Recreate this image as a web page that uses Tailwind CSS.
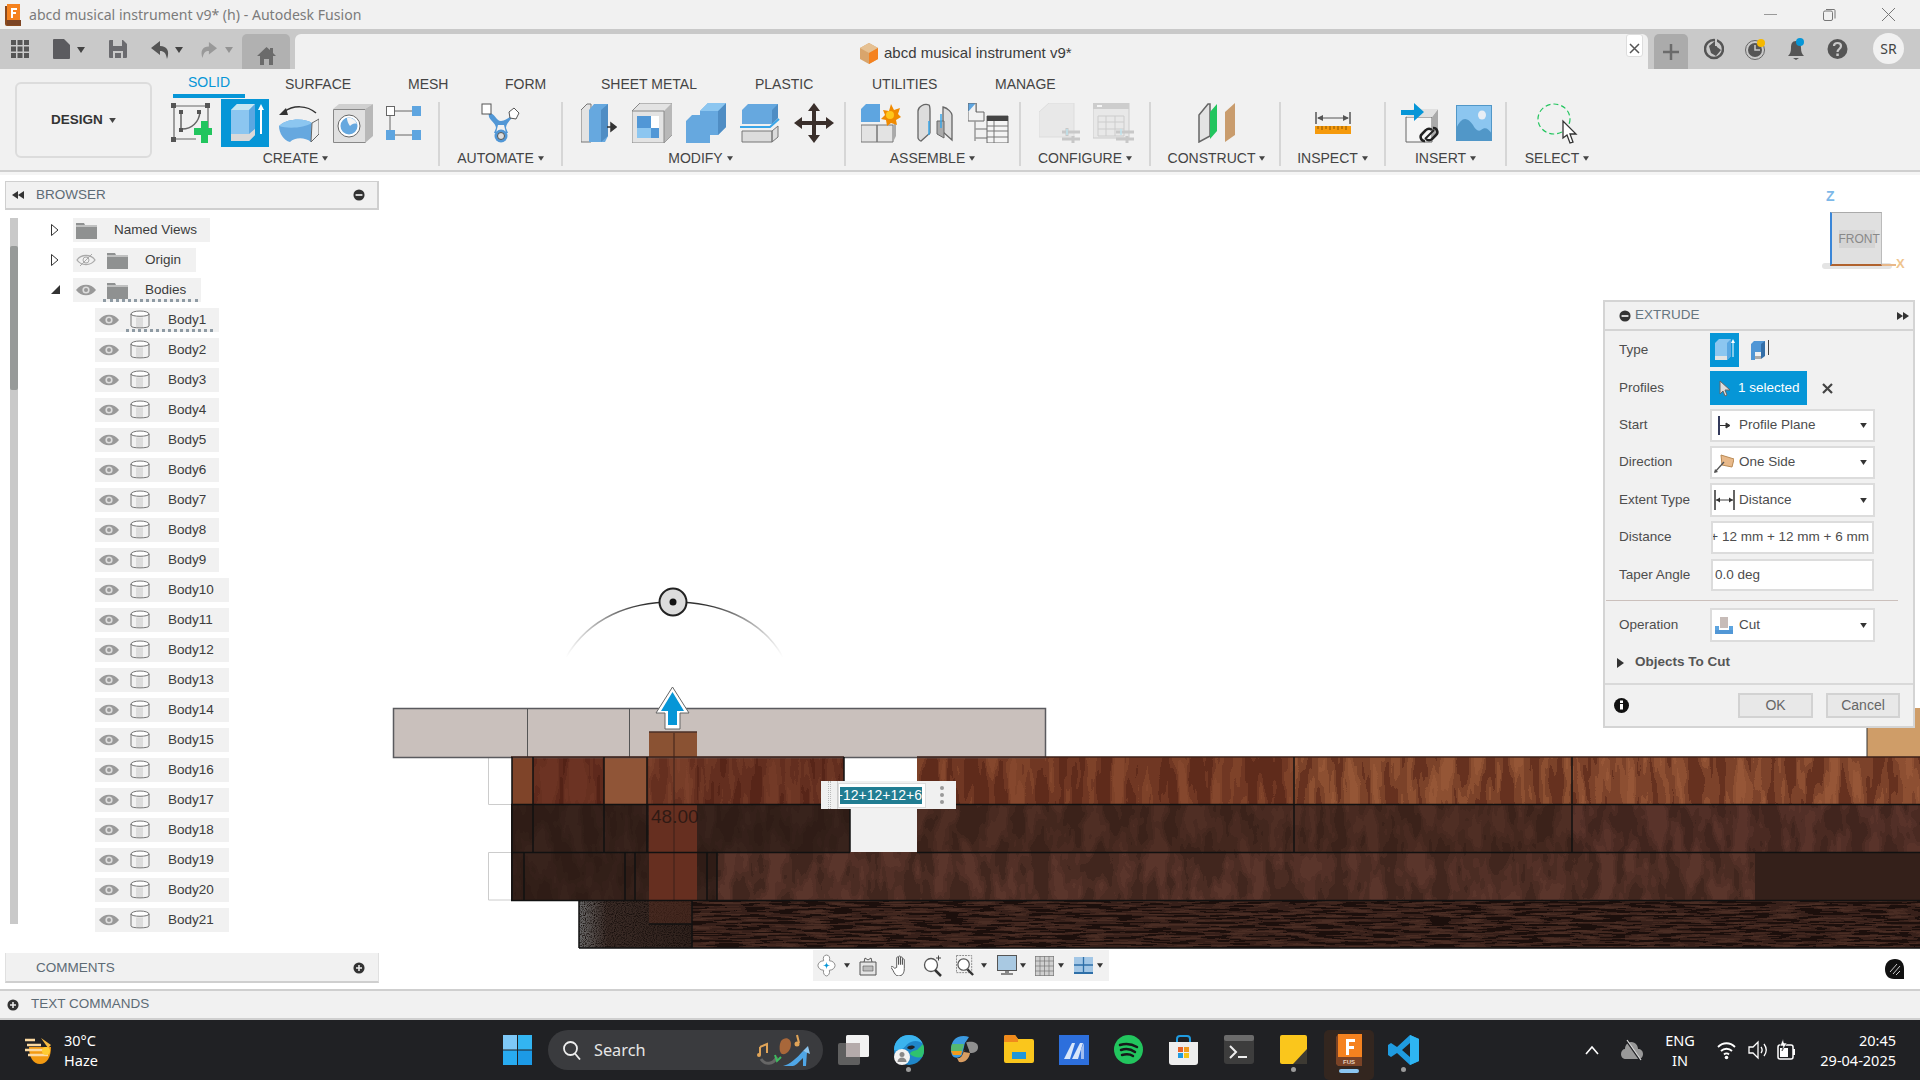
<!DOCTYPE html>
<html lang="en">
<head>
<meta charset="UTF-8">
<title>abcd musical instrument v9* (h) - Autodesk Fusion</title>
<script src="https://cdn.jsdelivr.net/npm/@tailwindcss/browser@4"></script>
</head>
<body class="w-[1920px] h-[1080px] overflow-hidden bg-white font-['Liberation_Sans',Arial,sans-serif] text-[13.5px] text-[#444]">

<!-- shared icons -->
<svg class="hidden">
  <symbol id="caret" viewBox="0 0 8 6"><path d="M0 0h8L4 6z" fill="#444"/></symbol>
  <symbol id="eye" viewBox="0 0 20 14"><path d="M0 7C5 0 15 0 20 7C15 14 5 14 0 7Z" fill="#999"/><circle cx="10" cy="7" r="3.6" fill="#ddd"/><circle cx="10" cy="7" r="2" fill="#999"/></symbol>
  <symbol id="folder" viewBox="0 0 21 17"><path d="M0 1h8l1 2h12v14H0z" fill="#8f9191"/><path d="M0 4h21" stroke="#f1f1f1"/></symbol>
  <symbol id="body" viewBox="0 0 20 20"><ellipse cx="10" cy="4" rx="9" ry="3" fill="#fff" stroke="#777"/><path d="M1 4v12c0 2.5 18 2.5 18 0V4c0 3-18 3-18 0z" fill="#f2f2f2" stroke="#777"/><path d="M6 7.500h7v9.500H6z" fill="#dcdcdc"/></symbol>
  <symbol id="plusdot" viewBox="0 0 14 14"><circle cx="7" cy="7" r="6.500" fill="#333"/><path d="M3.500 7h7M7 3.500v7" stroke="#eee" stroke-width="1.800"/></symbol>
  <symbol id="minusdot" viewBox="0 0 14 14"><circle cx="7" cy="7" r="6.500" fill="#333"/><path d="M3 7h8" stroke="#eee" stroke-width="2"/></symbol>
  <symbol id="dcaret" viewBox="0 0 8 6"><path d="M0 0h8L4 6z" fill="#333"/></symbol>
</svg>

<!-- title bar -->
<header class="h-[29px] bg-[#f1f1f1] flex items-center relative">
  <svg class="ml-[4px] w-[18px] h-[22px]" viewBox="0 0 18 22"><path d="M3 0h13v17H3z" fill="#f5821f"/><path d="M1 2h2v18h14v2H3a2 2 0 0 1-2-2z" fill="#8a4a1e"/><path d="M3 16h14v5H3z" fill="#7b4424"/><path d="M7 4h6v2H9v2h3v2H9v4H7z" fill="#fff"/></svg>
  <span class="ml-[7px] font-['Noto_Sans',sans-serif] text-[14.1px] text-[#7b7b7b] whitespace-nowrap">abcd musical instrument v9* (h) - Autodesk Fusion</span>
  <div class="ml-auto flex items-center text-[#666]">
    <svg class="w-[13px] h-[13px]" viewBox="0 0 13 13"><path d="M0 6.500h13" stroke="#999"/></svg>
    <svg class="ml-[46px] w-[13px] h-[13px]" viewBox="0 0 13 13"><path d="M3 1.500h8a1 1 0 0 1 1 1v8" fill="none" stroke="#777"/><rect x=".5" y="3" width="9" height="9.500" rx="1.500" fill="none" stroke="#777"/></svg>
    <svg class="ml-[46px] mr-[25px] w-[13px] h-[13px]" viewBox="0 0 13 13"><path d="M0 0l13 13M13 0L0 13" stroke="#777"/></svg>
  </div>
</header>

<!-- tab bar -->
<div class="h-[40px] bg-[#c9c9c9] flex items-end">
  <div class="w-[242px] h-[40px] flex items-center relative">
    <svg class="absolute left-[11px] top-[11px] w-[18px] h-[18px]" viewBox="0 0 18 18"><path d="M0 0h5v5H0zM6.500 0h5v5h-5zM13 0h5v5h-5zM0 6.500h5v5H0zM6.500 6.500h5v5h-5zM13 6.500h5v5h-5zM0 13h5v5H0zM6.500 13h5v5h-5zM13 13h5v5h-5z" fill="#555"/></svg>
    <svg class="absolute left-[53px] top-[10px] w-[17px] h-[20px]" viewBox="0 0 17 20"><path d="M1 0h10l6 6v13a1 1 0 0 1-1 1H1a1 1 0 0 1-1-1V1a1 1 0 0 1 1-1z" fill="#5b5b5f"/></svg>
    <svg class="absolute left-[77px] top-[18px] w-[8px] h-[6px]"><use href="#caret"/></svg>
    <svg class="absolute left-[109px] top-[11px] w-[18px] h-[18px]" viewBox="0 0 18 18"><path d="M1 0h13l4 4v13a1 1 0 0 1-1 1H1a1 1 0 0 1-1-1V1a1 1 0 0 1 1-1z" fill="#6b6b6f"/><path d="M4 0h9v6H4zM4 11h10v7H4z" fill="#c9c9c9"/><path d="M6 13h6v5H6z" fill="#6b6b6f"/></svg>
    <svg class="absolute left-[151px] top-[12px] w-[20px] h-[18px]" viewBox="0 0 20 18"><path d="M9 0L0 7l9 7v-4c4 0 6 2 7 8 3-8 0-13-7-13z" fill="#555"/></svg>
    <svg class="absolute left-[175px] top-[18px] w-[8px] h-[6px]"><use href="#caret"/></svg>
    <svg class="absolute left-[199px] top-[12px] w-[18px] h-[18px]" viewBox="0 0 20 18"><path d="M11 0l9 7-9 7v-4c-4 0-6 2-7 8C1 10 4 5 11 5z" fill="#999"/></svg>
    <svg class="absolute left-[225px] top-[18px] w-[8px] h-[6px] opacity-40"><use href="#caret"/></svg>
  </div>
  <div class="w-[48px] h-[35px] bg-[#b1b1b1] rounded-t-[5px] flex items-center justify-center pt-[8px]">
    <svg class="w-[19px] h-[18px]" viewBox="0 0 19 18"><path d="M9.500 0L0 9h3v9h4v-6h5v6h4V9h3l-3-3V1h-3v2z" fill="#6b6b6b"/></svg>
  </div>
  <div class="ml-[5px] w-[1353px] h-[35px] bg-[#f1f1f1] rounded-t-[6px] relative flex items-center justify-center">
    <div class="absolute left-[565px] top-[8px] flex items-center whitespace-nowrap">
      <svg class="w-[18px] h-[21px]" viewBox="0 0 18 21"><path d="M9 0l9 5v11l-9 5-9-5V5z" fill="#d9a56c"/><path d="M9 0l9 5-9 5-9-5z" fill="#e6c193"/><path d="M9 10l9-5v11l-9 5z" fill="#f5821f"/></svg>
      <span class="ml-[6px] text-[15px] text-[#3c3c3c]">abcd musical instrument v9*</span>
    </div>
    <div class="absolute left-[1331px] top-0 w-[17px] h-[23px] bg-white rounded-[3px] border border-[#ddd] flex items-end justify-center pb-[2px]">
      <svg class="w-[11px] h-[11px]" viewBox="0 0 11 11"><path d="M1 1l9 9M10 1l-9 9" stroke="#555" stroke-width="1.500"/></svg>
    </div>
  </div>
  <div class="ml-[6px] w-[34px] h-[35px] bg-[#ababab] rounded-t-[5px] flex items-center justify-center">
    <svg class="w-[16px] h-[16px]" viewBox="0 0 16 16"><path d="M8 0v16M0 8h16" stroke="#6b6b6b" stroke-width="2.500"/></svg>
  </div>
  <div class="flex items-center h-[40px] relative flex-1">
    <svg class="absolute left-[16px] top-[9px] w-[20px] h-[22px]" viewBox="0 0 20 22"><circle cx="10" cy="11" r="9" fill="none" stroke="#555" stroke-width="2.500"/><path d="M5 8l6-5 2 6 4 3-5 6-5-3z" fill="#555"/><path d="M12 0v8" stroke="#c9c9c9" stroke-width="2"/></svg>
    <svg class="absolute left-[57px] top-[9px] w-[21px] h-[22px]" viewBox="0 0 21 22"><circle cx="10" cy="12" r="9.500" fill="none" stroke="#666"/><circle cx="10" cy="12" r="7" fill="#555"/><path d="M10 7v5h5" fill="none" stroke="#c9c9c9" stroke-width="1.500"/><circle cx="16" cy="5" r="4" fill="#f5b800"/></svg>
    <svg class="absolute left-[100px] top-[9px] w-[17px] h-[23px]" viewBox="0 0 17 23"><path d="M8 3c-4 0-5 3-5 7 0 4-1 6-3 8h16c-2-2-3-4-3-8 0-4-1-7-5-7z" fill="#555"/><path d="M5 20h6l-3 2z" fill="#555"/><circle cx="12" cy="4" r="4" fill="#0696d7"/></svg>
    <svg class="absolute left-[139px] top-[9px] w-[21px] h-[22px]" viewBox="0 0 21 22"><circle cx="10.500" cy="11" r="10" fill="#555"/><path d="M7 8c0-4 7-4 7 0 0 3-3.500 3-3.500 6" fill="none" stroke="#c9c9c9" stroke-width="2.200"/><path d="M9.300 15.500h2.500V18H9.300z" fill="#c9c9c9"/></svg>
    <div class="absolute left-[185px] top-[4px] w-[31px] h-[31px] rounded-full bg-[#f1f1f1] flex items-center justify-center font-['Noto_Sans',sans-serif] text-[14px] text-[#444]">SR</div>
  </div>
</div>

<!-- ribbon -->
<div class="h-[103px] bg-[#f1f1f1] border-b-2 border-[#cfcfcf] flex text-[14px]">
  <div class="ml-[15px] mt-[13px] w-[137px] h-[76px] border-2 border-[#dcdcdc] rounded-[6px] flex items-center justify-center gap-[6px] font-bold text-[#333] text-[13.5px]">DESIGN <svg class="w-[7px] h-[5px]"><use href="#caret"/></svg></div>
  <div class="flex flex-col">
    <div class="flex h-[29px] text-[#444]">
      <div class="ml-[21px] w-[72px] h-[29px] border-b-4 border-[#0696d7] text-[#0696d7] flex items-center justify-center pt-[2px]">SOLID</div>
      <div class="ml-[40px] flex items-center h-[29px] pt-[1px] whitespace-nowrap"><span class="w-[123px]">SURFACE</span><span class="w-[97px]">MESH</span><span class="w-[96px]">FORM</span><span class="w-[154px]">SHEET METAL</span><span class="w-[117px]">PLASTIC</span><span class="w-[123px]">UTILITIES</span><span>MANAGE</span></div>
    </div>
    <div class="flex mt-[4px] ml-[1px]">

      <!-- CREATE -->
      <div class="w-[287px] h-[64px] border-r-2 border-[#d6d6d6] flex flex-col">
        <div class="h-[42px] flex items-center pl-[18px]">
          <svg class="w-[41px] h-[41px]" viewBox="0 0 41 41"><path d="M3 3h34M3 3v33M3 36h22M37 3v22" stroke="#666" stroke-width="1.200"/><path d="M10 10v17M11 26c10 0 17-7 18-17" fill="none" stroke="#666" stroke-width="1.500"/><path d="M0 0h5v5H0zM34 0h5v5h-5zM0 34h5v5H0zM8 7h4v4H8zM8 25h4v4H8zM26 7h4v4h-4z" fill="#555"/><path d="M24 24h7v-7h7v7h4v7h-4v8h-7v-8h-7z" fill="#22c55e" transform="translate(-1 1)"/></svg>
          <div class="ml-[9px] w-[48px] h-[48px] -my-[3px] bg-[#0696d7] flex items-center justify-center shrink-0">
            <svg class="w-[40px] h-[44px]" viewBox="0 0 40 44"><path d="M6 9L12 3h18v31l-6 6H6z" fill="#8cc6f0"/><path d="M6 9L12 3h18l-6 6z" fill="#c4e6f2"/><path d="M24 9l6-6v25l-6 6z" fill="#5aa7e2"/><path d="M6 33h18v7H6zM24 33l6-5v6l-6 6z" fill="#d9d9d9"/><path d="M36 3l-3 6h2v24h2V9h2z" fill="#fff"/></svg>
          </div>
          <svg class="ml-[10px] w-[40px] h-[40px] shrink-0" viewBox="0 0 40 40"><path d="M37 10C28 2 14 2 5 9" fill="none" stroke="#333" stroke-width="1.500"/><path d="M0 12l7-7 2 7z" fill="#333"/><path d="M0 23c8-8 26-8 33-3l-1 19c-6-5-16-5-21 0C5 38 0 30 0 23z" fill="#66a8df"/><path d="M0 23c8-8 26-8 33-3-8 5-24 6-33 3z" fill="#8cc6f0"/><path d="M33 20l7-4v15l-8 8z" fill="#eee" stroke="#666"/></svg>
          <svg class="ml-[14px] w-[40px] h-[40px] shrink-0" viewBox="0 0 40 40"><path d="M.5 6.500h32v33H.5z" fill="#e0e0e0" stroke="#888"/><path d="M0 6l6-5h34l-8 5z" fill="#d0d0d0"/><path d="M32 6l8-5v32l-8 7z" fill="#b8b8b8"/><circle cx="16" cy="23" r="11" fill="#fff" stroke="#666"/><circle cx="16" cy="23" r="8.500" fill="#66a8df"/><path d="M14 15a8.500 8.500 0 0 1 10 6c-3-1-5 0-7 2-2-3-3-5-3-8z" fill="#f4f4f4"/></svg>
          <svg class="ml-[13px] w-[35px] h-[34px] shrink-0" viewBox="0 0 35 34"><rect x=".5" y=".5" width="8" height="9" fill="#fff" stroke="#666"/><path d="M9 5h17M4 10v14M9 29h17" stroke="#666"/><path d="M26 0h9v10h-9zM0 24h9v10H0zM26 24h9v10h-9z" fill="#5ea5e0"/></svg>
        </div>
        <div class="mt-[6px] leading-[16px] flex items-center justify-center gap-[4px]">CREATE <svg class="w-[6px] h-[5px]"><use href="#caret"/></svg></div>
      </div>

      <!-- AUTOMATE -->
      <div class="w-[123px] h-[64px] border-r-2 border-[#d6d6d6] flex flex-col">
        <div class="h-[42px] flex items-center justify-center">
          <svg class="w-[40px] h-[40px]" viewBox="0 0 40 40"><path d="M8 10c6 0 7 8 12 8 5 0 9-5 12-6-1 5-7 7-7 13l2 5h-14l2-5c0-6-9-8-7-15z" fill="#5197d6"/><path d="M17 22h6l2 8h-10z" fill="#f1f1f1"/><circle cx="20" cy="33" r="6.500" fill="#5197d6"/><circle cx="20" cy="33" r="3.500" fill="#ddd" stroke="#555"/><rect x="1" y="1" width="9" height="10" fill="#fff" stroke="#555"/><path d="M33 5l5 5-3 6-6-1-1-6z" fill="#fff" stroke="#555"/></svg>
        </div>
        <div class="mt-[6px] leading-[16px] flex items-center justify-center gap-[4px]">AUTOMATE <svg class="w-[6px] h-[5px]"><use href="#caret"/></svg></div>
      </div>

      <!-- MODIFY -->
      <div class="w-[283px] h-[64px] border-r-2 border-[#d6d6d6] flex flex-col">
        <div class="h-[42px] flex items-center pl-[18px]">
          <svg class="w-[36px] h-[40px]" viewBox="0 0 36 40"><path d="M0 7l6-6h4v38H0z" fill="#e3e3e3" stroke="#777"/><path d="M8 7l5-6h14v32l-3 6H8z" fill="#66a8df"/><path d="M20 7l7-6v32l-7 6z" fill="#4f8dc4"/><path d="M26 24h7M30 20l5 4-5 4z" stroke="#333" stroke-width="1.500" fill="#333"/></svg>
          <svg class="ml-[15px] w-[40px] h-[40px]" viewBox="0 0 40 40"><path d="M0 8l8-8h32v32l-8 8H0z" fill="#e3e3e3" stroke="#888"/><path d="M32 8l8-8v32l-8 8z" fill="#b8b8b8"/><path d="M0 8h32v32" fill="none" stroke="#888"/><path d="M5 13h22v22H5z" fill="#fff"/><path d="M5 13h14v12h8v10H5z" fill="#5197d6"/><path d="M5 25h14v10H5z" fill="#8cc6f0"/></svg>
          <svg class="ml-[14px] w-[40px] h-[40px]" viewBox="0 0 40 40"><path d="M14 8l8-8h18v24l-8 8h-8v8H0V18l6-6h8z" fill="#66a8df"/><path d="M32 8l8-8v24l-8 8z" fill="#4f8dc4"/><path d="M14 8l8-8h18l-8 8z" fill="#8cc6f0"/></svg>
          <svg class="ml-[14px] w-[40px] h-[40px]" viewBox="0 0 40 40"><path d="M2 7l6-6h30v14l-6 6H2z" fill="#66a8df"/><path d="M32 7l6-6v14l-6 6z" fill="#4f8dc4"/><path d="M0 24h30l9-8" fill="none" stroke="#39a5e8" stroke-width="2"/><path d="M2 28h30v11H2zM32 28l6-5v11l-6 5z" fill="#dcdcdc" stroke="#777"/></svg>
          <svg class="ml-[14px] w-[40px] h-[40px]" viewBox="0 0 40 40"><path d="M20 0l6 8h-4v10h10v-4l8 6-8 6v-4H22v10h4l-6 8-6-8h4V22H8v4l-8-6 8-6v4h10V8h-4z" fill="#3a2f2b"/></svg>
        </div>
        <div class="mt-[6px] pr-[6px] leading-[16px] flex items-center justify-center gap-[4px]">MODIFY <svg class="w-[6px] h-[5px]"><use href="#caret"/></svg></div>
      </div>

      <!-- ASSEMBLE -->
      <div class="w-[175px] h-[64px] border-r-2 border-[#d6d6d6] flex flex-col">
        <div class="h-[42px] flex items-center pl-[15px]">
          <svg class="w-[40px] h-[40px]" viewBox="0 0 40 40"><path d="M0 6l5-5h14v18H0z" fill="#5ea5e0"/><path d="M0 22h16v17H0zM16 22h16v17H16z" fill="#e3e3e3" stroke="#777"/><path d="M32 22l3-3v14l-3 6z" fill="#aaa"/><path d="M30 1l3 6 6-2-2 6 3 3-5 3 1 5-6-2-4 3-1-6-5-1 4-4-2-5 6 1z" fill="#f08a00"/><circle cx="29" cy="12" r="4" fill="#ffc61a"/></svg>
          <svg class="ml-[16px] w-[36px] h-[40px]" viewBox="0 0 36 40"><path d="M1 8c0-4 6-8 11-6 1 1 1 3 1 6v22L4 38c-1 0-3-2-3-3z" fill="#ddd" stroke="#666" stroke-width="1.300"/><path d="M35 12c0-2-4-7-9-8v25l9 8z" fill="#ddd" stroke="#666" stroke-width="1.300"/><path d="M20 18h7v17l-7-4z" fill="#aaa" stroke="#666"/><path d="M24 11v14M12 18v14" stroke="#39a5e8" stroke-width="1.500"/></svg>
          <svg class="ml-[15px] w-[41px] h-[40px]" viewBox="0 0 41 40"><path d="M0 0h8v9H0z" fill="#5ea5e0" stroke="#666"/><path d="M8 0v9h8v9H0V9" fill="#f1f1f1" stroke="#666"/><path d="M7 18v20M7 26h12M7 35h12" stroke="#999" stroke-width="1.500"/><path d="M19 13h21v27H19z" fill="#f4f4f4" stroke="#666"/><path d="M19 13h21v5H19z" fill="#444"/><path d="M19 23h21M19 28h21M19 34h21M26 18v22" stroke="#777"/></svg>
        </div>
        <div class="mt-[6px] leading-[16px] flex items-center justify-center gap-[4px]">ASSEMBLE <svg class="w-[6px] h-[5px]"><use href="#caret"/></svg></div>
      </div>

      <!-- CONFIGURE -->
      <div class="w-[130px] h-[64px] border-r-2 border-[#d6d6d6] flex flex-col">
        <div class="h-[42px] flex items-center pl-[18px]">
          <svg class="w-[41px] h-[40px]" viewBox="0 0 41 40"><path d="M0 9l10-9h25v34H0z" fill="#e8e8e8" stroke="#ddd"/><path d="M23 29h18M23 36h18" stroke="#c8c8c8" stroke-width="3"/><path d="M28 25v8M34 33v7" stroke="#c8c8c8" stroke-width="3"/><path d="M28 26v6" stroke="#bfe4ef" stroke-width="1.500"/></svg>
          <svg class="ml-[13px] w-[41px] h-[40px]" viewBox="0 0 41 40"><path d="M0 0h36v35H0z" fill="#e8e8e8" stroke="#ccc"/><path d="M0 0h36v6H0z" fill="#cdcdcd"/><path d="M4 2h5v2H4z" fill="#f5f5f5"/><path d="M5 13h26v20H5zM5 19h26M5 26h26M13 13v20M22 13v20" fill="none" stroke="#ccc"/><path d="M23 29h18M23 36h18" stroke="#c8c8c8" stroke-width="3"/><path d="M34 33v7" stroke="#c8c8c8" stroke-width="3"/><path d="M28 26v6" stroke="#bfe4ef" stroke-width="1.500"/></svg>
        </div>
        <div class="mt-[6px] leading-[16px] flex items-center justify-center gap-[4px]">CONFIGURE <svg class="w-[6px] h-[5px]"><use href="#caret"/></svg></div>
      </div>

      <!-- CONSTRUCT -->
      <div class="w-[130px] h-[64px] border-r-2 border-[#d6d6d6] flex flex-col">
        <div class="h-[42px] flex items-center pl-[47px]">
          <svg class="w-[38px] h-[40px]" viewBox="0 0 38 40"><path d="M1 12L10 1h2v32l-11 6z" fill="#e3e3e3" stroke="#666" stroke-width="1.500"/><path d="M12 9L19 1v27l-7 8z" fill="#22c55e"/><path d="M27 9L37 0v32l-10 7z" fill="#c99c6d"/></svg>
        </div>
        <div class="mt-[6px] pl-[3px] leading-[16px] flex items-center justify-center gap-[4px]">CONSTRUCT <svg class="w-[6px] h-[5px]"><use href="#caret"/></svg></div>
      </div>

      <!-- INSPECT -->
      <div class="w-[105px] h-[64px] border-r-2 border-[#d6d6d6] flex flex-col">
        <div class="h-[42px] flex items-center justify-center">
          <svg class="w-[36px] h-[40px]" viewBox="0 0 36 40"><path d="M1 9v12M35 9v12" stroke="#555" stroke-width="1.500"/><path d="M3 15h30" stroke="#555"/><path d="M2 15l6-3v6zM34 15l-6-3v6z" fill="#555"/><path d="M0 23h36v8H0z" fill="#f59a0c"/><path d="M3 23v3M7 23v4M11 23v3M15 23v4M19 23v3M23 23v4M27 23v3M31 23v4" stroke="#8a5500"/></svg>
        </div>
        <div class="mt-[6px] leading-[16px] flex items-center justify-center gap-[4px]">INSPECT <svg class="w-[6px] h-[5px]"><use href="#caret"/></svg></div>
      </div>

      <!-- INSERT -->
      <div class="w-[121px] h-[64px] border-r-2 border-[#d6d6d6] flex flex-col">
        <div class="h-[42px] flex items-center pl-[15px]">
          <svg class="w-[40px] h-[41px]" viewBox="0 0 40 41"><path d="M5 14h26v25H5z" fill="#f5f5f5" stroke="#666"/><path d="M31 14l6-8v24l-6 7z" fill="#aaa"/><path d="M5 14l7-8h25l-6 8z" fill="#e0e0e0"/><path d="M0 7h13V0l10 9-10 9v-6H0z" fill="#0696d7"/><path d="M24 36l9-9" stroke="#222" stroke-width="2"/><path d="M24 38a4 4 0 0 1-3-7l4-4a4 4 0 0 1 6 0M32 25a4 4 0 0 1 3 7l-4 4a4 4 0 0 1-6 0" fill="none" stroke="#222" stroke-width="2.500"/></svg>
          <svg class="ml-[15px] w-[36px] h-[36px]" viewBox="0 0 36 36"><path d="M0 0h36v36H0z" fill="#8cc6f0"/><path d="M0 36V24C5 12 11 11 17 20c2 4 5 7 8 5 4-3 7-2 11 4v7z" fill="#5197c8"/><ellipse cx="26" cy="10" rx="4" ry="4.500" fill="#e8eef5"/><rect x=".5" y=".5" width="35" height="35" fill="none" stroke="#5197c8"/></svg>
        </div>
        <div class="mt-[6px] leading-[16px] flex items-center justify-center gap-[4px]">INSERT <svg class="w-[6px] h-[5px]"><use href="#caret"/></svg></div>
      </div>

      <!-- SELECT -->
      <div class="w-[100px] h-[64px] flex flex-col">
        <div class="h-[42px] flex items-center pl-[30px]">
          <svg class="w-[41px] h-[41px]" viewBox="0 0 41 41"><ellipse cx="17" cy="16" rx="16" ry="15" fill="none" stroke="#22c55e" stroke-width="1.200" stroke-dasharray="5 3"/><path d="M26 18l0 17 4-3 3 8 3-1-3-8 6 0z" fill="#fff" stroke="#333" stroke-width="1.300"/></svg>
        </div>
        <div class="mt-[6px] leading-[16px] flex items-center justify-center gap-[4px]">SELECT <svg class="w-[6px] h-[5px]"><use href="#caret"/></svg></div>
      </div>
    </div>
  </div>
</div>
<div class="h-[3px] bg-[#f5f5f5]"></div>

<!-- viewport -->
<main class="h-[814px] relative bg-white overflow-hidden">

  <!-- model in the viewport -->
  <svg class="absolute inset-0 w-[1920px] h-[814px]" viewBox="0 175 1920 814">
    <defs>
      <filter id="grain" x="0" y="0" width="100%" height="100%" color-interpolation-filters="sRGB">
        <feTurbulence type="fractalNoise" baseFrequency="0.07 0.012" numOctaves="3" seed="7"/>
        <feColorMatrix type="matrix" values="0 0 0 0 .25  0 0 0 0 .08  0 0 0 0 .05  1.600 0 0 0 -.1"/>
        <feComponentTransfer><feFuncA type="discrete" tableValues="0 0 0 .1 .3 .55"/></feComponentTransfer>
        <feComposite in2="SourceGraphic" operator="in" result="d"/>
        <feMerge><feMergeNode in="SourceGraphic"/><feMergeNode in="d"/></feMerge>
      </filter>
      <filter id="grainDark" x="0" y="0" width="100%" height="100%" color-interpolation-filters="sRGB">
        <feTurbulence type="fractalNoise" baseFrequency="0.06 0.025" numOctaves="3" seed="3"/>
        <feColorMatrix type="matrix" values="0 0 0 0 .14  0 0 0 0 .08  0 0 0 0 .06  1.600 0 0 0 -.1"/>
        <feComponentTransfer><feFuncA type="discrete" tableValues="0 0 0 .12 .28 .45"/></feComponentTransfer>
        <feComposite in2="SourceGraphic" operator="in" result="d"/>
        <feMerge><feMergeNode in="SourceGraphic"/><feMergeNode in="d"/></feMerge>
      </filter>
      <filter id="grainFlat" x="0" y="0" width="100%" height="100%" color-interpolation-filters="sRGB">
        <feTurbulence type="fractalNoise" baseFrequency="0.035 0.45" numOctaves="2" seed="9"/>
        <feColorMatrix type="matrix" values="0 0 0 0 .08  0 0 0 0 .04  0 0 0 0 .03  2 0 0 0 -.3"/>
        <feComponentTransfer><feFuncA type="discrete" tableValues="0 0 .15 .35 .85"/></feComponentTransfer>
        <feComposite in2="SourceGraphic" operator="in" result="d"/>
        <feMerge><feMergeNode in="SourceGraphic"/><feMergeNode in="d"/></feMerge>
      </filter>
      <filter id="speckle" x="0" y="0" width="100%" height="100%" color-interpolation-filters="sRGB">
        <feTurbulence type="fractalNoise" baseFrequency="0.9" numOctaves="1" seed="2"/>
        <feColorMatrix type="matrix" values="0 0 0 0 .08  0 0 0 0 .05  0 0 0 0 .04  3 0 0 0 -1.300"/>
        <feComposite in2="SourceGraphic" operator="in" result="d"/>
        <feMerge><feMergeNode in="SourceGraphic"/><feMergeNode in="d"/></feMerge>
      </filter>
      <linearGradient id="arcfade" x1="0" x2="1" y1="0" y2="0">
        <stop offset="0" stop-color="#333" stop-opacity="0"/><stop offset=".35" stop-color="#333"/><stop offset=".65" stop-color="#333"/><stop offset="1" stop-color="#333" stop-opacity="0"/>
      </linearGradient>
      <linearGradient id="endgrain" x1="0" x2="1" y1="0" y2="0">
        <stop offset="0" stop-color="#6b6b6b"/><stop offset=".25" stop-color="#3a2b26"/><stop offset="1" stop-color="#2f211c"/>
      </linearGradient>
    </defs>

    <!-- white stubs on the left -->
    <path d="M488.500 757.500H512V804.500H488.500zM488.500 852.500H512V900H488.500z" fill="#fff" stroke="#ccc"/>
    <!-- tan block behind the panel -->
    <rect x="1867" y="708" width="53" height="49" fill="#cf9d68"/><path d="M1867 708V757" stroke="#333"/>

    <!-- first row -->
    <g filter="url(#grain)">
      <rect x="533" y="757" width="71" height="47" fill="#6c3323"/>
      <rect x="647" y="757" width="197" height="47" fill="#733a27"/>
      <rect x="917" y="757" width="377" height="47" fill="#85472d"/>
      <rect x="1294" y="757" width="278" height="47" fill="#955636"/>
      <rect x="1572" y="757" width="348" height="47" fill="#965637"/>
    </g>
    <rect x="512" y="757" width="21" height="47" fill="#7f4429"/>
    <rect x="604" y="757" width="43" height="47" fill="#905537"/>
    <!-- second row -->
    <g filter="url(#grainDark)">
      <rect x="511" y="804" width="339" height="48" fill="#38231c"/>
      <rect x="917" y="804" width="377" height="48" fill="#4f2e24"/>
      <rect x="1294" y="804" width="278" height="48" fill="#4f2e24"/>
      <rect x="1572" y="804" width="348" height="48" fill="#59332a"/>
    </g>
    <rect x="850" y="804" width="67" height="48" fill="#f1f1f1"/>
    <!-- third row -->
    <g filter="url(#grainDark)">
      <rect x="511" y="852" width="209" height="48" fill="#38231c"/>
      <rect x="717" y="852" width="1038" height="48" fill="#5a352b"/>
    </g>
    <rect x="1755" y="852" width="165" height="48" fill="#34201a"/>
    <!-- fourth row -->
    <rect x="692" y="900" width="1228" height="48" fill="#4a2d24" filter="url(#grainFlat)"/>
    <rect x="579" y="900" width="113" height="48" fill="url(#endgrain)" filter="url(#speckle)"/>
    <rect x="649" y="900" width="43" height="24" fill="#5c2f22" opacity=".45"/>

    <!-- grey sketch body -->
    <rect x="393.500" y="708.500" width="652" height="49" fill="#c9c0bc" stroke="#5a5a5e" stroke-width="1.500"/>
    <path d="M527.500 709V757M629.500 709V757" stroke="#555"/>

    <!-- centre pocket -->
    <rect x="649" y="732" width="48" height="25" fill="#8a5233"/>
    <path d="M649 732H697" stroke="#4a3128" stroke-width="1.500"/>
    <rect x="649" y="757" width="48" height="47" fill="#a05a3a" opacity=".2"/>
    <rect x="649" y="804" width="48" height="96" fill="#662f20"/>
    <path d="M674 733V900" stroke="#3c2018"/>

    <!-- joints -->
    <path d="M511 757H844M917 757H1920" stroke="#3c2018" stroke-width="1.500"/>
    <path d="M511 804.500H850M917 804.500H1920M511 852.500H850M917 852.500H1920M511 900.500H1920M579 948H1920" stroke="#111" stroke-width="1.500"/>
    <path d="M512 757V900M533 757V852M604 757V852M647 757V852M844 757V804M850 804V852M1294 757V852M1572 757V852M524 852V900M625 852V900M635 852V900M707 852V900M717 852V900M579 900V948M692 900V948M649 924H692" stroke="#111" stroke-width="1.500"/>

    <text x="651" y="823" font-family="Liberation Sans" font-size="19" fill="#1d1310" fill-opacity=".75">48.00</text>

    <!-- angle manipulator -->
    <path d="M566 657C590 617 630 602 673 602C716 602 760 617 783 657" fill="none" stroke="url(#arcfade)" stroke-width="1.500"/>
    <circle cx="673" cy="602" r="13.500" fill="#dcdcdc" stroke="#222" stroke-width="2"/>
    <circle cx="673" cy="602" r="3.500" fill="#111"/>
    <!-- distance arrow -->
    <path d="M672.500 687L689 713H680V729H665V713H656z" fill="#fff" stroke="#666" stroke-linejoin="round"/>
    <path d="M672.500 692L684 711H677V725H668V711H661z" fill="#0696d7"/>
  </svg>

  <!-- distance input over the model -->
  <div class="absolute left-[821px] top-[606px] w-[135px] h-[28px] bg-[#f0f0f0] flex items-center">
    <div class="w-[17px] h-full border-r border-[#ccc] flex justify-center"><div class="w-[3px] h-full border-x border-dotted border-[#bbb]"></div></div>
    <div class="w-[88px] h-[25px] bg-white border border-[#ddd] flex items-center pl-[1px] pr-[3px] overflow-hidden">
      <span class="w-full h-[17px] bg-[#217d92] text-white text-[14px] leading-[17px] whitespace-nowrap flex justify-end overflow-hidden">+12+12+12+6</span>
    </div>
    <div class="ml-[14px] flex flex-col gap-[3px]"><i class="w-[4px] h-[4px] rounded-full bg-[#999]"></i><i class="w-[4px] h-[4px] rounded-full bg-[#999]"></i><i class="w-[4px] h-[4px] rounded-full bg-[#999]"></i></div>
  </div>

  <!-- view cube -->
  <div class="absolute left-[1822px] top-[12px] w-[90px] h-[84px]">
    <span class="absolute left-[4px] top-[2px] text-[14px] font-bold leading-none text-[#7db8e8]">Z</span>
    <div class="absolute left-[0px] top-[76px] w-[70px] h-[6px] rounded-full bg-[#e4e4e4]"></div>
    <div class="absolute left-[8px] top-[25px] w-[52px] h-[54px] bg-[#e0e0e0] border-l-2 border-l-[#3a86d8] border-t border-t-[#aaa] border-r border-r-[#bbb] border-b-2 border-b-[#b0622e] flex items-center justify-center">
      <span class="w-[36px] h-[18px] bg-[#d4d4d4] text-[12px] leading-[18px] text-center text-[#888]">FRONT</span>
    </div>
    <span class="absolute left-[74px] top-[70px] text-[13px] font-bold leading-none text-[#efc48d]">X</span>
    <div class="absolute left-[60px] top-[77px] w-[14px] h-[2px] bg-[#e8b88a]"></div>
  </div>

  <!-- browser panel -->
  <div class="absolute left-[5px] top-[6px] w-[374px]">
    <div class="h-[29px] bg-[#f1f1f1] border-2 border-[#cfcfcf] border-l border-t flex items-center">
      <svg class="ml-[6px] w-[12px] h-[8px]" viewBox="0 0 12 8"><path d="M6 0v8L0 4zM12 0v8L6 4z" fill="#333"/></svg>
      <span class="ml-[12px] pt-[1px] text-[#5d6b75]">BROWSER</span>
      <svg class="ml-auto mr-[12px] w-[12px] h-[12px]"><use href="#minusdot"/></svg>
    </div>
    <div class="relative pt-[8px] text-[#3c3c3c]">
      <div class="absolute left-[5px] top-[8px] w-[8px] h-[706px] bg-[#c9c9c9]"><div class="mt-[28px] h-[144px] bg-[#979a99] rounded-[2px]"></div></div>

      <div class="h-[24px] mb-[6px] ml-[68px] w-[137px] bg-[#f1f1f1] flex items-center relative"><svg class="absolute -left-[22px] top-[6px] w-[8px] h-[12px]" viewBox="0 0 8 12"><path d="M.5.5L7 6 .5 11.500z" fill="#fff" stroke="#333"/></svg><svg class="ml-[3px] w-[21px] h-[17px]"><use href="#folder"/></svg><span class="ml-[17px]">Named Views</span></div>
      <div class="h-[24px] mb-[6px] ml-[68px] w-[123px] bg-[#f1f1f1] flex items-center relative"><svg class="absolute -left-[22px] top-[6px] w-[8px] h-[12px]" viewBox="0 0 8 12"><path d="M.5.5L7 6 .5 11.500z" fill="#fff" stroke="#333"/></svg><svg class="ml-[3px] w-[20px] h-[14px]" viewBox="0 0 20 14"><path d="M1 7C5 1 15 1 19 7C15 13 5 13 1 7Z" fill="none" stroke="#aaa" stroke-width="1.300"/><circle cx="10" cy="7" r="3" fill="none" stroke="#aaa"/><path d="M4 13L16 1" stroke="#aaa"/></svg><svg class="ml-[11px] w-[21px] h-[17px]"><use href="#folder"/></svg><span class="ml-[17px]">Origin</span></div>
      <div class="h-[24px] mb-[6px] ml-[68px] w-[128px] bg-[#f1f1f1] flex items-center relative"><svg class="absolute -left-[22px] top-[7px] w-[9px] h-[9px]" viewBox="0 0 9 9"><path d="M9 0v9H0z" fill="#333"/></svg><svg class="ml-[3px] w-[20px] h-[14px]"><use href="#eye"/></svg><svg class="ml-[11px] w-[21px] h-[17px]"><use href="#folder"/></svg><span class="ml-[17px]">Bodies</span><i class="absolute left-[30px] top-[21px] w-[95px] border-b-[3px] border-dotted border-[#8e9aa3]"></i></div>

      <div class="h-[24px] mb-[6px] ml-[90px] w-[124px] bg-[#f1f1f1] flex items-center relative"><svg class="ml-[4px] w-[20px] h-[14px]"><use href="#eye"/></svg><svg class="ml-[11px] w-[20px] h-[20px]"><use href="#body"/></svg><span class="ml-[18px]">Body1</span><i class="absolute left-[31px] top-[21px] w-[87px] border-b-[3px] border-dotted border-[#8e9aa3]"></i></div>
      <div class="h-[24px] mb-[6px] ml-[90px] w-[124px] bg-[#f1f1f1] flex items-center"><svg class="ml-[4px] w-[20px] h-[14px]"><use href="#eye"/></svg><svg class="ml-[11px] w-[20px] h-[20px]"><use href="#body"/></svg><span class="ml-[18px]">Body2</span></div>
      <div class="h-[24px] mb-[6px] ml-[90px] w-[124px] bg-[#f1f1f1] flex items-center"><svg class="ml-[4px] w-[20px] h-[14px]"><use href="#eye"/></svg><svg class="ml-[11px] w-[20px] h-[20px]"><use href="#body"/></svg><span class="ml-[18px]">Body3</span></div>
      <div class="h-[24px] mb-[6px] ml-[90px] w-[124px] bg-[#f1f1f1] flex items-center"><svg class="ml-[4px] w-[20px] h-[14px]"><use href="#eye"/></svg><svg class="ml-[11px] w-[20px] h-[20px]"><use href="#body"/></svg><span class="ml-[18px]">Body4</span></div>
      <div class="h-[24px] mb-[6px] ml-[90px] w-[124px] bg-[#f1f1f1] flex items-center"><svg class="ml-[4px] w-[20px] h-[14px]"><use href="#eye"/></svg><svg class="ml-[11px] w-[20px] h-[20px]"><use href="#body"/></svg><span class="ml-[18px]">Body5</span></div>
      <div class="h-[24px] mb-[6px] ml-[90px] w-[124px] bg-[#f1f1f1] flex items-center"><svg class="ml-[4px] w-[20px] h-[14px]"><use href="#eye"/></svg><svg class="ml-[11px] w-[20px] h-[20px]"><use href="#body"/></svg><span class="ml-[18px]">Body6</span></div>
      <div class="h-[24px] mb-[6px] ml-[90px] w-[124px] bg-[#f1f1f1] flex items-center"><svg class="ml-[4px] w-[20px] h-[14px]"><use href="#eye"/></svg><svg class="ml-[11px] w-[20px] h-[20px]"><use href="#body"/></svg><span class="ml-[18px]">Body7</span></div>
      <div class="h-[24px] mb-[6px] ml-[90px] w-[124px] bg-[#f1f1f1] flex items-center"><svg class="ml-[4px] w-[20px] h-[14px]"><use href="#eye"/></svg><svg class="ml-[11px] w-[20px] h-[20px]"><use href="#body"/></svg><span class="ml-[18px]">Body8</span></div>
      <div class="h-[24px] mb-[6px] ml-[90px] w-[124px] bg-[#f1f1f1] flex items-center"><svg class="ml-[4px] w-[20px] h-[14px]"><use href="#eye"/></svg><svg class="ml-[11px] w-[20px] h-[20px]"><use href="#body"/></svg><span class="ml-[18px]">Body9</span></div>
      <div class="h-[24px] mb-[6px] ml-[90px] w-[134px] bg-[#f1f1f1] flex items-center"><svg class="ml-[4px] w-[20px] h-[14px]"><use href="#eye"/></svg><svg class="ml-[11px] w-[20px] h-[20px]"><use href="#body"/></svg><span class="ml-[18px]">Body10</span></div>
      <div class="h-[24px] mb-[6px] ml-[90px] w-[134px] bg-[#f1f1f1] flex items-center"><svg class="ml-[4px] w-[20px] h-[14px]"><use href="#eye"/></svg><svg class="ml-[11px] w-[20px] h-[20px]"><use href="#body"/></svg><span class="ml-[18px]">Body11</span></div>
      <div class="h-[24px] mb-[6px] ml-[90px] w-[134px] bg-[#f1f1f1] flex items-center"><svg class="ml-[4px] w-[20px] h-[14px]"><use href="#eye"/></svg><svg class="ml-[11px] w-[20px] h-[20px]"><use href="#body"/></svg><span class="ml-[18px]">Body12</span></div>
      <div class="h-[24px] mb-[6px] ml-[90px] w-[134px] bg-[#f1f1f1] flex items-center"><svg class="ml-[4px] w-[20px] h-[14px]"><use href="#eye"/></svg><svg class="ml-[11px] w-[20px] h-[20px]"><use href="#body"/></svg><span class="ml-[18px]">Body13</span></div>
      <div class="h-[24px] mb-[6px] ml-[90px] w-[134px] bg-[#f1f1f1] flex items-center"><svg class="ml-[4px] w-[20px] h-[14px]"><use href="#eye"/></svg><svg class="ml-[11px] w-[20px] h-[20px]"><use href="#body"/></svg><span class="ml-[18px]">Body14</span></div>
      <div class="h-[24px] mb-[6px] ml-[90px] w-[134px] bg-[#f1f1f1] flex items-center"><svg class="ml-[4px] w-[20px] h-[14px]"><use href="#eye"/></svg><svg class="ml-[11px] w-[20px] h-[20px]"><use href="#body"/></svg><span class="ml-[18px]">Body15</span></div>
      <div class="h-[24px] mb-[6px] ml-[90px] w-[134px] bg-[#f1f1f1] flex items-center"><svg class="ml-[4px] w-[20px] h-[14px]"><use href="#eye"/></svg><svg class="ml-[11px] w-[20px] h-[20px]"><use href="#body"/></svg><span class="ml-[18px]">Body16</span></div>
      <div class="h-[24px] mb-[6px] ml-[90px] w-[134px] bg-[#f1f1f1] flex items-center"><svg class="ml-[4px] w-[20px] h-[14px]"><use href="#eye"/></svg><svg class="ml-[11px] w-[20px] h-[20px]"><use href="#body"/></svg><span class="ml-[18px]">Body17</span></div>
      <div class="h-[24px] mb-[6px] ml-[90px] w-[134px] bg-[#f1f1f1] flex items-center"><svg class="ml-[4px] w-[20px] h-[14px]"><use href="#eye"/></svg><svg class="ml-[11px] w-[20px] h-[20px]"><use href="#body"/></svg><span class="ml-[18px]">Body18</span></div>
      <div class="h-[24px] mb-[6px] ml-[90px] w-[134px] bg-[#f1f1f1] flex items-center"><svg class="ml-[4px] w-[20px] h-[14px]"><use href="#eye"/></svg><svg class="ml-[11px] w-[20px] h-[20px]"><use href="#body"/></svg><span class="ml-[18px]">Body19</span></div>
      <div class="h-[24px] mb-[6px] ml-[90px] w-[134px] bg-[#f1f1f1] flex items-center"><svg class="ml-[4px] w-[20px] h-[14px]"><use href="#eye"/></svg><svg class="ml-[11px] w-[20px] h-[20px]"><use href="#body"/></svg><span class="ml-[18px]">Body20</span></div>
      <div class="h-[24px] mb-[6px] ml-[90px] w-[134px] bg-[#f1f1f1] flex items-center"><svg class="ml-[4px] w-[20px] h-[14px]"><use href="#eye"/></svg><svg class="ml-[11px] w-[20px] h-[20px]"><use href="#body"/></svg><span class="ml-[18px]">Body21</span></div>
    </div>
  </div>

  <!-- comments -->
  <div class="absolute left-[5px] top-[778px] w-[374px] h-[30px] bg-[#f1f1f1] border-b-2 border-[#cfcfcf] border-x border-x-[#e0e0e0] flex items-center">
    <span class="ml-[30px] pt-[2px] text-[#5d6b75]">COMMENTS</span>
    <svg class="ml-auto mr-[13px] w-[12px] h-[12px] mt-[2px]"><use href="#plusdot"/></svg>
  </div>

  <!-- extrude dialog -->
  <div class="absolute left-[1603px] top-[125px] w-[312px] h-[428px] bg-[#f1f1f1] border-2 border-[#d4d4d4] flex flex-col text-[#4d4d4d]">
    <div class="h-[29px] shrink-0 border-b-2 border-[#d4d4d4] flex items-center">
      <svg class="ml-[14px] w-[12px] h-[12px]"><use href="#minusdot"/></svg>
      <span class="ml-[4px] text-[#667680]">EXTRUDE</span>
      <svg class="ml-auto mr-[4px] w-[12px] h-[8px]" viewBox="0 0 12 8"><path d="M0 0v8l6-4zM6 0v8l6-4z" fill="#333"/></svg>
    </div>
    <div class="mt-[2px] h-[34px] flex items-center pl-[14px]">
      <span class="w-[91px]">Type</span>
      <div class="w-[29px] h-[34px] bg-[#0696d7] flex items-center justify-center"><svg class="w-[20px] h-[22px]" viewBox="0 0 20 22"><path d="M0 4l4-4h12v17l-4 4H0z" fill="#8cc6f0"/><path d="M0 17h12v4H0z" fill="#e3e3e3"/><path d="M12 4l4-4v17l-4 4z" fill="#5aa7e2"/><path d="M18 0l-2 4h1.500v14h1V4H20z" fill="#fff"/></svg></div>
      <svg class="ml-[12px] w-[19px] h-[20px]" viewBox="0 0 19 20"><path d="M0 4l3-3h11v15H10v-4H4v8H0z" fill="#5197d6"/><path d="M10 4l4-3v15l-4 3z" fill="#346fa8"/><path d="M4 16h6v3H4z" fill="#aaa"/><path d="M17.500 0v15" stroke="#444"/></svg>
    </div>
    <div class="mt-[4px] h-[34px] flex items-center pl-[14px]">
      <span class="w-[91px]">Profiles</span>
      <div class="w-[97px] h-[34px] bg-[#0696d7] text-white flex items-center">
        <svg class="ml-[9px] w-[12px] h-[17px]" viewBox="0 0 12 17"><path d="M1 1v13l3-3 2 5 2-1-2-5h5z" fill="#ddd" stroke="#666"/></svg>
        <span class="ml-[7px]">1 selected</span>
      </div>
      <svg class="ml-[15px] w-[11px] h-[11px]" viewBox="0 0 11 11"><path d="M1 1l9 9M10 1l-9 9" stroke="#444" stroke-width="2.200"/></svg>
    </div>
    <div class="mt-[4px] h-[33px] flex items-center pl-[14px]">
      <span class="w-[91px]">Start</span>
      <div class="w-[165px] h-[33px] bg-white border-2 border-[#dcdcdc] flex items-center">
        <svg class="ml-[6px] w-[13px] h-[19px]" viewBox="0 0 13 19"><path d="M1 0v19" stroke="#333a5c" stroke-width="2"/><path d="M2 9.500h7M8 7l4 2.500L8 12z" stroke="#333" fill="#333"/></svg>
        <span class="ml-[8px]">Profile Plane</span>
        <svg class="ml-auto mr-[6px] w-[7px] h-[5px]"><use href="#dcaret"/></svg>
      </div>
    </div>
    <div class="mt-[4px] h-[33px] flex items-center pl-[14px]">
      <span class="w-[91px]">Direction</span>
      <div class="w-[165px] h-[33px] bg-white border-2 border-[#dcdcdc] flex items-center">
        <svg class="ml-[2px] w-[20px] h-[20px]" viewBox="0 0 20 20"><path d="M7 2l13 4-2 8-10-2z" fill="#e8b98a" stroke="#b98a55"/><path d="M1 19L10 9" stroke="#555" stroke-width="1.300"/><path d="M0 20l1-4 3 3z" fill="#555"/></svg>
        <span class="ml-[5px]">One Side</span>
        <svg class="ml-auto mr-[6px] w-[7px] h-[5px]"><use href="#dcaret"/></svg>
      </div>
    </div>
    <div class="mt-[4px] h-[34px] flex items-center pl-[14px]">
      <span class="w-[91px]">Extent Type</span>
      <div class="w-[165px] h-[34px] bg-white border-2 border-[#dcdcdc] flex items-center">
        <svg class="ml-[2px] w-[21px] h-[20px]" viewBox="0 0 21 20"><path d="M1 0v20M20 0v20" stroke="#333" stroke-width="1.500"/><path d="M2 10h17" stroke="#444"/><path d="M2 10l4-2.500v5zM19 10l-4-2.500v5z" fill="#333"/></svg>
        <span class="ml-[4px]">Distance</span>
        <svg class="ml-auto mr-[6px] w-[7px] h-[5px]"><use href="#dcaret"/></svg>
      </div>
    </div>
    <div class="mt-[4px] h-[33px] flex items-center pl-[14px]">
      <span class="w-[92px]">Distance</span>
      <div class="w-[163px] h-[33px] bg-white border-2 border-[#dcdcdc] flex items-center justify-end overflow-hidden pr-[3px] whitespace-nowrap">+ 12 mm + 12 mm + 6 mm</div>
    </div>
    <div class="mt-[5px] h-[32px] flex items-center pl-[14px]">
      <span class="w-[92px]">Taper Angle</span>
      <div class="w-[163px] h-[32px] bg-white border-2 border-[#dcdcdc] flex items-center pl-[2px]">0.0 deg</div>
    </div>
    <div class="mt-[9px] mx-[1px] w-[292px] h-px bg-[#cbc0bc]"></div>
    <div class="mt-[7px] h-[34px] flex items-center pl-[14px]">
      <span class="w-[91px]">Operation</span>
      <div class="w-[165px] h-[34px] bg-white border-2 border-[#dcdcdc] flex items-center">
        <svg class="ml-[3px] w-[18px] h-[17px]" viewBox="0 0 18 17"><path d="M0 9h4v4h10V9h4v8H0z" fill="#5ea5e0"/><path d="M5 0h8v11H5z" fill="#c7bcb8"/><path d="M0 13h18v4H0z" fill="#5197d6"/></svg>
        <span class="ml-[6px]">Cut</span>
        <svg class="ml-auto mr-[6px] w-[7px] h-[5px]"><use href="#dcaret"/></svg>
      </div>
    </div>
    <div class="mt-[4px] mb-[4px] h-[33px] flex items-center pl-[12px] font-bold text-[#555]">
      <svg class="w-[7px] h-[10px]" viewBox="0 0 7 10"><path d="M0 0l7 5-7 5z" fill="#333"/></svg>
      <span class="ml-[11px]">Objects To Cut</span>
    </div>
    <div class="h-[2px] bg-[#d9d9d9]"></div>
    <div class="flex-1 flex items-center pl-[9px]">
      <svg class="w-[15px] h-[15px]" viewBox="0 0 15 15"><circle cx="7.500" cy="7.500" r="7.500" fill="#111"/><path d="M6 6h3v5.500h-3zM6 2.500h3V5H6z" fill="#fff"/></svg>
      <div class="ml-[109px] w-[75px] h-[25px] bg-[#e8e8e8] border-2 border-[#d2d2d2] flex items-center justify-center text-[14px] text-[#666]">OK</div>
      <div class="ml-[13px] w-[74px] h-[25px] bg-[#e8e8e8] border-2 border-[#d2d2d2] flex items-center justify-center text-[14px] text-[#666]">Cancel</div>
    </div>
  </div>

  <!-- navigation bar -->
  <div class="absolute left-[813px] top-[775px] w-[296px] h-[31px] bg-[#f1f1f1] flex items-center">
    <svg class="ml-[4px] w-[19px] h-[23px]" viewBox="0 0 20 24"><path d="M10 1c3 0 4 3 3 6 4 0 6 3 6 5s-2 5-6 5c1 3-1 6-3 6s-4-3-3-6c-4 0-6-3-6-5s2-5 6-5c-1-3 0-6 3-6z" fill="#fff" stroke="#888"/><circle cx="10" cy="12" r="1.500" fill="#0696d7"/><path d="M10 9v6M7 12h6" stroke="#0696d7" stroke-width=".7"/></svg>
    <svg class="ml-[8px] w-[6px] h-[5px]"><use href="#dcaret"/></svg>
    <svg class="ml-[9px] w-[18px] h-[20px]" viewBox="0 0 18 20"><path d="M1 6h16v13H1z" fill="#e4e4e4" stroke="#555"/><path d="M4 10h10v5H4z" fill="#bbb" stroke="#555" stroke-width=".6"/><path d="M5 6l1-4 3 2M13 6l-1-4-3 2" fill="none" stroke="#555"/></svg>
    <svg class="ml-[14px] w-[19px] h-[21px]" viewBox="0 0 20 22"><path d="M6 13V3a1 1 0 0 1 2 0v7-8a1 1 0 0 1 2 0v8-7a1 1 0 0 1 2 0v7-5a1 1 0 0 1 2 0v9c0 5-2 8-6 8-3 0-4-2-6-6l-2-3c0-2 2-1 4 1z" fill="#fff" stroke="#555"/></svg>
    <svg class="ml-[13px] w-[20px] h-[22px]" viewBox="0 0 20 22"><circle cx="8" cy="10" r="6.500" fill="#fff" stroke="#555" stroke-width="1.300"/><path d="M12 15l6 6" stroke="#333" stroke-width="2.500"/><path d="M13 3h5M15.500 .5v5" stroke="#444"/></svg>
    <svg class="ml-[13px] w-[19px] h-[21px]" viewBox="0 0 20 22"><rect x=".5" y=".5" width="16" height="18" fill="none" stroke="#888" stroke-dasharray="2 1"/><circle cx="8" cy="10" r="6" fill="#fff" stroke="#555" stroke-width="1.300"/><path d="M12 15l6 6" stroke="#333" stroke-width="2.500"/></svg>
    <svg class="ml-[6px] w-[6px] h-[5px]"><use href="#dcaret"/></svg>
    <svg class="ml-[10px] w-[20px] h-[21px]" viewBox="0 0 20 21"><rect x=".5" y=".5" width="19" height="15" fill="#a9c9e2" stroke="#555"/><path d="M8 16h4v2H8zM4 18h12v2H4z" fill="#888"/></svg>
    <svg class="ml-[3px] w-[6px] h-[5px]"><use href="#dcaret"/></svg>
    <svg class="ml-[9px] w-[19px] h-[20px]" viewBox="0 0 19 20"><rect width="19" height="20" fill="#cfcfcf"/><path d="M.5 0v20M5 0v20M9.500 0v20M14 0v20M18.500 0v20M0 .5h19M0 5h19M0 10h19M0 15h19M0 19.500h19" stroke="#777" stroke-width=".7"/></svg>
    <svg class="ml-[4px] w-[6px] h-[5px]"><use href="#dcaret"/></svg>
    <svg class="ml-[10px] w-[19px] h-[17px]" viewBox="0 0 19 17"><rect width="19" height="17" fill="#a3c7e6"/><path d="M9.500 0v17M0 8h19" stroke="#2e6fa8" stroke-width="1.300"/><path d="M0 16h19" stroke="#2e6fa8" stroke-width="2"/></svg>
    <svg class="ml-[4px] w-[6px] h-[5px]"><use href="#dcaret"/></svg>
  </div>

  <!-- feedback button -->
  <svg class="absolute left-[1885px] top-[784px] w-[19px] h-[20px]" viewBox="0 0 19 20"><path d="M10 0c6 0 9 4 9 10v10H9C3 20 0 16 0 10S4 0 10 0z" fill="#111"/><path d="M5 13l7-8M8 15l7-8M11 16l4-4" stroke="#ccc"/></svg>
</main>

<!-- text commands -->
<div class="h-[31px] bg-[#f1f1f1] border-y-2 border-[#cfcfcf] flex items-center">
  <svg class="ml-[7px] w-[12px] h-[12px]"><use href="#plusdot"/></svg>
  <span class="ml-[12px] text-[#5d6b75]">TEXT COMMANDS</span>
</div>

<!-- taskbar -->
<footer class="h-[60px] bg-[#202124] flex items-center text-white font-['Noto_Sans',sans-serif] text-[14.5px]">
  <div class="w-[490px] flex items-center shrink-0">
    <svg class="ml-[25px] w-[30px] h-[28px]" viewBox="0 0 30 28"><path d="M4 11c0 10 4 17 11 17s11-7 11-17z" fill="#f39a12"/><path d="M0 4h10M2 9h14M0 14h24M3 19h20" stroke="#fcd9a0" stroke-width="2.500"/><path d="M16 2l10 7-3 3z" fill="#f5b942"/><circle cx="21" cy="15" r="4" fill="#ffcc33"/></svg>
    <div class="ml-[9px] flex flex-col leading-[20px]"><span>30°C</span><span>Haze</span></div>
  </div>
  <div class="w-[55px] flex justify-center shrink-0">
    <svg class="w-[29px] h-[30px]" viewBox="0 0 29 30"><path d="M0 0h14v14.500H0z" fill="#7ec8f7"/><path d="M15 0h14v14.500H15z" fill="#33b5f2"/><path d="M0 15.500h14V30H0z" fill="#28abf0"/><path d="M15 15.500h14V30H15z" fill="#1c9ae6"/></svg>
  </div>
  <div class="ml-[3px] w-[275px] h-[40px] rounded-full bg-[#3a3b3e] flex items-center shrink-0">
    <svg class="ml-[15px] w-[18px] h-[19px]" viewBox="0 0 18 19"><circle cx="7.500" cy="7.500" r="6.500" fill="none" stroke="#eee" stroke-width="1.800"/><path d="M12 12.500l5 6" stroke="#eee" stroke-width="1.800"/></svg>
    <span class="ml-[13px] text-[16.3px] text-[#e6e6e6]">Search</span>
    <svg class="ml-auto mr-[10px] w-[56px] h-[34px]" viewBox="0 0 56 34"><path d="M24 8c4-5 10-3 10 3s-4 11-9 10c-3-1-3-9-1-13z" fill="#a8673a"/><path d="M3 14l7-3v9M3 14v8" fill="none" stroke="#e0a458" stroke-width="2"/><circle cx="2" cy="22" r="2" fill="#e0a458"/><path d="M40 2l2 8" stroke="#e0a458" stroke-width="2"/><circle cx="40" cy="11" r="2.500" fill="#e0a458"/><path d="M4 26c4 6 12 6 16-2" fill="none" stroke="#666" stroke-width="3"/><path d="M18 22l2 6 4-4" fill="none" stroke="#3dbb5e" stroke-width="2"/><path d="M26 33c6-1 14-8 20-15l4 1-1 14h-3v-8c-5 5-8 8-10 8z" fill="#4fa6e6"/><path d="M46 18l5-5 2 8z" fill="#8cc6f0"/></svg>
  </div>
  <div class="ml-[3px] flex shrink-0">
    <div class="w-[55px] flex justify-center"><svg class="w-[31px] h-[30px]" viewBox="0 0 31 30"><rect x="0" y="8" width="22" height="22" rx="2" fill="#5f5f5f"/><rect x="8" y="0" width="23" height="22" rx="1.500" fill="#f2f2f2"/><rect x="8" y="8" width="14" height="14" fill="#b5abab"/></svg></div>
    <div class="w-[55px] flex flex-col items-center relative"><svg class="w-[30px] h-[30px]" viewBox="0 0 30 30"><circle cx="15" cy="15" r="15" fill="#1f86c9"/><path d="M0 15C0 6 7 0 15 0c7 0 12 4 14 9-3-3-8-4-12-2-5 2-6 6-9 7-3 1-6 2-8 1z" fill="#3bb4ee"/><path d="M29 9c2 5 1 10-1 13-4 1-9 0-12-3 1-4 7-3 8-5 1-1 3-3 5-5z" fill="#2fc26f"/><path d="M13 13c2-3 6-3 8-1-2 3-6 3-8 1z" fill="#202124"/><circle cx="8" cy="22" r="8" fill="#f2f2f2"/><circle cx="8" cy="19.500" r="2.500" fill="#888"/><path d="M3.500 27c0-6 9-6 9 0z" fill="#888"/></svg><i class="absolute top-[32px] w-[5px] h-[5px] rounded-full bg-[#9b9b9b]"></i></div>
    <div class="w-[55px] flex justify-center"><svg class="w-[28px] h-[28px]" viewBox="0 0 28 28"><path d="M4 5C7 1 14 0 19 2l-4 6-3 12c-3 4-9 3-10 0-2-5-1-11 2-15z" fill="#3b9ae0"/><path d="M2 9h12l-1 4H1zM1 13h12l-1 3H1z" fill="#56b870"/><path d="M1 16h11l-1 4H3z" fill="#f29b1d"/><path d="M15 8c4-2 13-2 13 4 0 4-3 6-8 6z" fill="#8f8f8f"/><path d="M20 18c-1 6-5 10-11 9l-2-4c4 1 6-3 7-8l6 1z" fill="#d99d62"/><path d="M16 7l4 11-6-1 1-9z" fill="#202124"/></svg></div>
    <div class="w-[55px] flex justify-center"><svg class="w-[30px] h-[28px]" viewBox="0 0 30 28"><path d="M0 2a2 2 0 0 1 2-2h9l3 4h14a2 2 0 0 1 2 2v20a2 2 0 0 1-2 2H2a2 2 0 0 1-2-2z" fill="#fac61c"/><path d="M0 2a2 2 0 0 1 2-2h9l3 4v3H0z" fill="#f08a1c"/><path d="M8 17h14v7H8z" fill="#2197d8"/></svg></div>
    <div class="w-[55px] flex justify-center"><svg class="w-[30px] h-[30px]" viewBox="0 0 30 30"><rect width="30" height="30" fill="#2d6fdc"/><path d="M5 24L13 8h3l-5 16zM13 24l8-16h3l-5 16z" fill="#d8e6fa"/><path d="M22 14v10h3V8z" fill="#9fbdf0"/></svg></div>
    <div class="w-[55px] flex justify-center"><svg class="w-[29px] h-[29px]" viewBox="0 0 29 29"><circle cx="14.500" cy="14.500" r="14.500" fill="#22c55e"/><path d="M6 10c6-2 12-1 17 2M7 15c5-2 10-1 14 2M8 20c4-1 8-1 11 1" fill="none" stroke="#16181a" stroke-width="2.500" stroke-linecap="round"/></svg></div>
    <div class="w-[55px] flex justify-center"><svg class="w-[29px] h-[30px]" viewBox="0 0 29 30"><path d="M8 7V4a3 3 0 0 1 3-3h7a3 3 0 0 1 3 3v3" fill="none" stroke="#1f9be0" stroke-width="2"/><path d="M0 7h29v20a3 3 0 0 1-3 3H3a3 3 0 0 1-3-3z" fill="#eee"/><path d="M9 12h5v5H9z" fill="#e8622a"/><path d="M15 12h5v5h-5z" fill="#f29b1d"/><path d="M9 18h5v5H9z" fill="#1f9be0"/><path d="M15 18h5v5h-5z" fill="#f5c518"/></svg></div>
    <div class="w-[55px] flex justify-center"><svg class="w-[30px] h-[29px]" viewBox="0 0 30 29"><rect width="30" height="29" rx="3" fill="#3d3d3d"/><rect width="30" height="6" rx="2" fill="#6b6b6b"/><path d="M6 11l6 6-6 6" fill="none" stroke="#eee" stroke-width="2"/><path d="M14 22h9" stroke="#eee" stroke-width="2"/></svg></div>
    <div class="w-[55px] flex flex-col items-center relative"><svg class="w-[27px] h-[29px]" viewBox="0 0 27 29"><rect width="27" height="29" rx="2" fill="#fac61c"/><path d="M27 14v15H13z" fill="#3d3a33"/></svg><i class="absolute top-[32px] w-[5px] h-[5px] rounded-full bg-[#9b9b9b]"></i></div>
    <div class="w-[55px] flex flex-col items-center relative"><div class="absolute -top-[5px] w-[50px] h-[50px] rounded-[5px] bg-[#33261f]"></div><svg class="relative mt-[-1px] w-[26px] h-[32px]" viewBox="0 0 26 32"><path d="M2 0h24v23H2z" fill="#f5821f"/><path d="M2 0L0 3v27l2 2h24V23H2z" fill="#7a4326"/><path d="M10 5h9v3h-6v4h5v3h-5v6h-3z" fill="#fff"/><text x="7" y="30" font-family="Liberation Sans" font-size="6" font-weight="700" fill="#e8d4c0">FUS</text></svg><i class="absolute top-[34px] w-[20px] h-[4px] rounded-full bg-[#8cc6f0]"></i></div>
    <div class="w-[55px] flex flex-col items-center relative"><svg class="w-[31px] h-[30px]" viewBox="0 0 31 30"><path d="M22 0l9 4v22l-9 4-13-12-6 4-3-2V10l3-2 6 4zM22 8l-8 7 8 7z" fill="#1f9be0"/><path d="M22 0l9 4v22l-9 4z" fill="#2eb5f2"/></svg><i class="absolute top-[32px] w-[5px] h-[5px] rounded-full bg-[#9b9b9b]"></i></div>
  </div>
  <div class="ml-[154px] flex items-center shrink-0">
    <svg class="w-[14px] h-[10px]" viewBox="0 0 14 10"><path d="M1 9l6-7 6 7" fill="none" stroke="#fff" stroke-width="1.600"/></svg>
    <svg class="ml-[22px] w-[22px] h-[22px]" viewBox="0 0 22 22"><path d="M10 3c5 0 7 4 7 7 3 0 5 2 5 5s-2 5-5 5H5c-3 0-5-2-5-5 0-3 2-5 4-5 0-4 3-7 6-7z" fill="#999"/><path d="M5 1l14 20" stroke="#202124" stroke-width="2"/><path d="M6 1l14 20" stroke="#ddd" stroke-width="1.200"/></svg>
    <div class="ml-[20px] w-[34px] flex flex-col items-center leading-[20px]"><span>ENG</span><span>IN</span></div>
    <svg class="ml-[20px] w-[19px] h-[19px]" viewBox="0 0 19 19"><path d="M1 6c5-5 12-5 17 0M4 10c3-3 8-3 11 0M7 13.500c1.500-1.500 3.500-1.500 5 0" fill="none" stroke="#fff" stroke-width="1.800"/><circle cx="9.500" cy="16.500" r="1.800" fill="#fff"/></svg>
    <svg class="ml-[12px] w-[20px] h-[20px]" viewBox="0 0 20 20"><path d="M1 7h4l5-5v16l-5-5H1z" fill="none" stroke="#fff" stroke-width="1.300"/><path d="M13 7c1.500 2 1.500 4 0 6M16 4c3 4 3 8 0 12" fill="none" stroke="#fff" stroke-width="1.300"/></svg>
    <svg class="ml-[9px] w-[20px] h-[22px]" viewBox="0 0 20 22"><rect x="1" y="6" width="15" height="14" rx="2" fill="none" stroke="#fff" stroke-width="1.500"/><path d="M16 10h2v6h-2z" fill="#fff"/><path d="M3 9h8v9H3z" fill="#fff"/><path d="M6 0L3 7h3l-1 5 5-8H7z" fill="#fff" stroke="#202124" stroke-width=".6"/></svg>
    <div class="ml-[14px] w-[85px] flex flex-col items-end leading-[20px] whitespace-nowrap"><span>20:45</span><span>29-04-2025</span></div>
  </div>
</footer>
</body>
</html>
